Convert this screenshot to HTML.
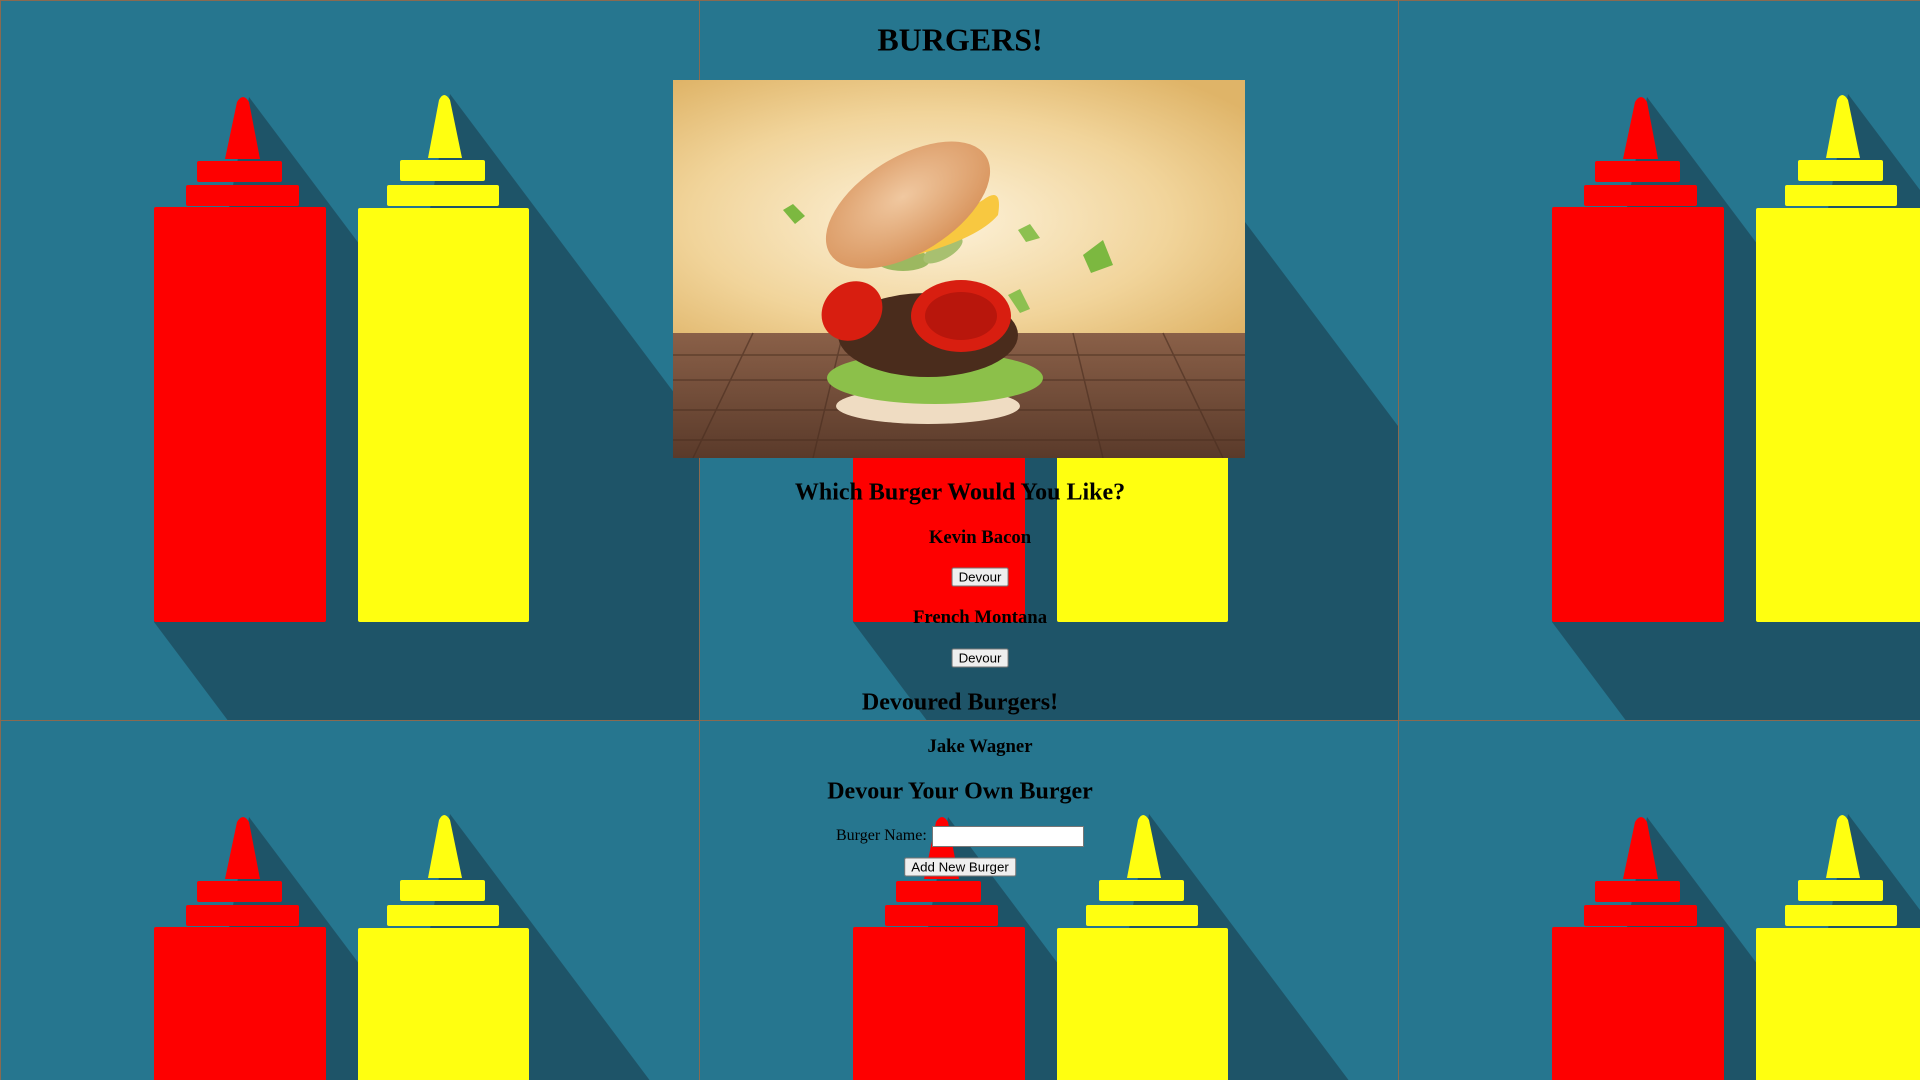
<!DOCTYPE html>
<html><head><meta charset="utf-8"><style>
html,body{margin:0;padding:0;width:1920px;height:1080px;overflow:hidden;background:#26768f;}
#bg{position:absolute;left:0;top:0}
.t{position:absolute;font-family:"Liberation Serif",serif;font-weight:bold;color:#000;white-space:nowrap;transform:translate(-50%,-50%);margin:0}
.btn{position:absolute;font-family:"Liberation Sans",sans-serif;font-size:13.3px;background:#efefef;border:1px solid #767676;border-radius:2px;color:#000;transform:translate(-50%,-50%);padding:1px 6px;line-height:15px;white-space:nowrap}
</style></head><body>
<svg id="bg" width="1920" height="1080" viewBox="0 0 1920 1080">
<defs>
<pattern id="p" x="0" y="0" width="699" height="720" patternUnits="userSpaceOnUse">
<rect width="699" height="720" fill="#26768f"/>
<polygon points="249,97 999,1097 904,1622 154,622" fill="#1e5468"/>
<polygon points="450,94 1200,1094 1108,1622 358,622" fill="#1e5468"/>
<rect x="154" y="207" width="172" height="415" rx="2" fill="#fe0000"/>
<rect x="186" y="185" width="113" height="21" rx="2" fill="#fe0000"/>
<rect x="197" y="161" width="85" height="21" rx="2" fill="#fe0000"/>
<path d="M225,159 L237,102 Q243,92 249,102 L260,159 Z" fill="#fe0000"/>
<rect x="358" y="208" width="171" height="414" rx="2" fill="#ffff10"/>
<rect x="387" y="185" width="112" height="21" rx="2" fill="#ffff10"/>
<rect x="400" y="160" width="85" height="21" rx="2" fill="#ffff10"/>
<path d="M428,158 L439,100 Q444,90 450,100 L462,158 Z" fill="#ffff10"/>
<rect x="0" y="0" width="699" height="1" fill="#8a6a50"/>
<rect x="0" y="0" width="1" height="720" fill="#8a6a50"/>
</pattern>
</defs>
<rect width="1920" height="1080" fill="url(#p)"/>
</svg>

<svg style="position:absolute;left:673px;top:80px" width="572" height="378" viewBox="0 0 572 378">
<defs>
<radialGradient id="sky" cx="0.45" cy="0.55" r="0.7"><stop offset="0" stop-color="#fdf3dc"/><stop offset="0.6" stop-color="#f1d49a"/><stop offset="1" stop-color="#dfb468"/></radialGradient>
<linearGradient id="wood" x1="0" y1="0" x2="0" y2="1"><stop offset="0" stop-color="#8a6048"/><stop offset="1" stop-color="#5a3a2a"/></linearGradient>
<radialGradient id="bun" cx="0.5" cy="0.4" r="0.6"><stop offset="0" stop-color="#f0c8a0"/><stop offset="1" stop-color="#d9955e"/></radialGradient>
</defs>
<rect width="572" height="253" fill="url(#sky)"/>
<rect y="253" width="572" height="125" fill="url(#wood)"/>
<g stroke="#4a2e20" stroke-width="1.5" opacity="0.6">
<line x1="0" y1="275" x2="572" y2="275"/><line x1="0" y1="300" x2="572" y2="300"/><line x1="0" y1="330" x2="572" y2="330"/><line x1="0" y1="360" x2="572" y2="360"/>
<line x1="80" y1="253" x2="20" y2="378"/><line x1="170" y1="253" x2="140" y2="378"/><line x1="400" y1="253" x2="430" y2="378"/><line x1="490" y1="253" x2="550" y2="378"/>
</g>
<ellipse cx="255" cy="326" rx="92" ry="18" fill="#efdcc2"/>
<ellipse cx="262" cy="298" rx="108" ry="26" fill="#8cc04a"/>
<ellipse cx="255" cy="255" rx="90" ry="42" fill="#4a2c1c"/>
<ellipse cx="179" cy="231" rx="32" ry="28" fill="#d81e10" transform="rotate(-40 179 231)"/>
<ellipse cx="288" cy="236" rx="50" ry="36" fill="#d81e10"/>
<ellipse cx="288" cy="236" rx="36" ry="24" fill="#b8160c"/>
<ellipse cx="230" cy="180" rx="27" ry="11" fill="#9cb860"/>
<ellipse cx="270" cy="170" rx="22" ry="9" fill="#a8c070" transform="rotate(-30 270 170)"/>
<path d="M200,180 Q260,150 310,120 Q330,105 325,135 Q300,165 200,185 Z" fill="#f8c840"/>
<ellipse cx="235" cy="125" rx="92" ry="48" fill="url(#bun)" transform="rotate(-32 235 125)"/>
<path d="M110,130 l10,-6 l12,12 l-10,8 z" fill="#7cb840"/>
<path d="M345,150 l12,-6 l10,14 l-14,4 z" fill="#8cc050"/>
<path d="M410,175 l20,-15 l10,25 l-22,8 z" fill="#7cb840"/>
<path d="M335,215 l12,-6 l10,20 l-10,4 z" fill="#8cc050"/>
</svg>

<h1 class="t" style="left:960px;top:40px;font-size:32px">BURGERS!</h1>
<h2 class="t" style="left:960px;top:493px;font-size:24px">Which Burger Would You Like?</h2>
<h3 class="t" style="left:980px;top:538px;font-size:18.7px">Kevin Bacon</h3>
<div class="btn" style="left:980px;top:577px">Devour</div>
<h3 class="t" style="left:980px;top:618px;font-size:18.7px">French Montana</h3>
<div class="btn" style="left:980px;top:658px">Devour</div>
<h2 class="t" style="left:960px;top:703px;font-size:24px">Devoured Burgers!</h2>
<h3 class="t" style="left:980px;top:747px;font-size:18.7px">Jake Wagner</h3>
<h2 class="t" style="left:960px;top:792px;font-size:24px">Devour Your Own Burger</h2>
<div style="position:absolute;left:836px;top:826px;font-family:'Liberation Serif',serif;font-size:16px;line-height:20px">Burger Name:</div>
<div style="position:absolute;left:932px;top:826px;width:150px;height:19px;background:#fff;border:1px solid #767676"></div>
<div class="btn" style="left:960px;top:867px">Add New Burger</div>
</body></html>
